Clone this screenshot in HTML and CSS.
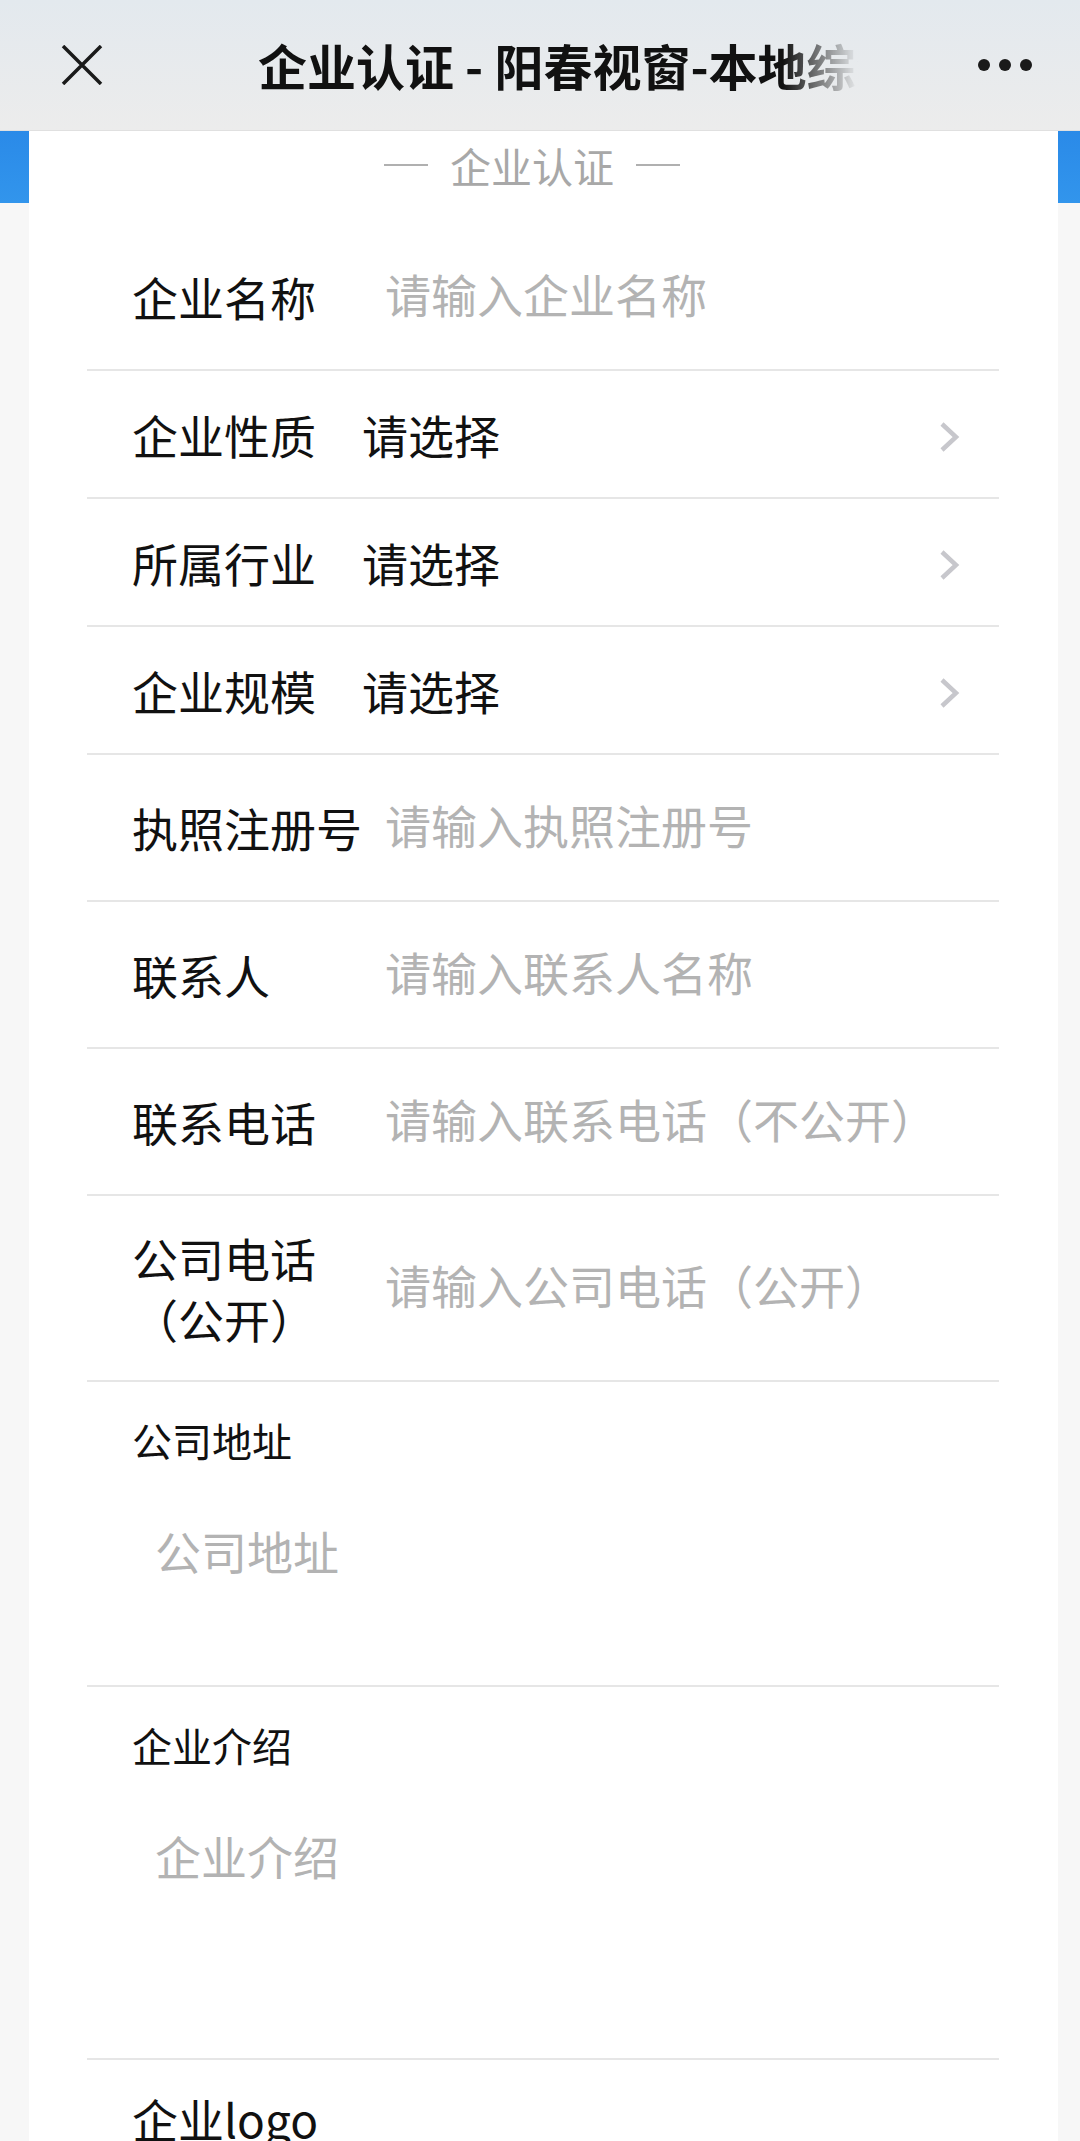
FILE: index.html
```html
<!DOCTYPE html>
<html lang="zh-CN">
<head>
    <meta charset="UTF-8">
    <meta name="viewport" content="width=device-width, initial-scale=1.0">
    <title>企业认证 - 阳春视窗-本地综合门户</title>
    <link rel="stylesheet" href="styles.css">
</head>
<body>
    <header class="navbar">
        <button class="nav-close" aria-label="关闭">
            <svg width="42" height="40" viewBox="0 0 42 40">
                <path d="M2 1 L40 39 M40 1 L2 39" stroke="#1a1a1a" stroke-width="3.5" fill="none"/>
            </svg>
        </button>
        <div class="nav-title">企业认证 - 阳春视窗-本地综合门户</div>
        <div class="nav-more">
            <span></span><span></span><span></span>
        </div>
    </header>

    <main class="page">
        <div class="card">
            <h2 class="section-title">企业认证</h2>

            <form class="form">
                <div class="cell cell-input">
                    <label class="cell-label">企业名称</label>
                    <input class="cell-field" type="text" placeholder="请输入企业名称">
                </div>

                <div class="cell cell-select">
                    <label class="cell-label">企业性质</label>
                    <span class="cell-value">请选择</span>
                    <svg class="cell-arrow" width="22" height="32" viewBox="0 0 22 32">
                        <path d="M3 3 L17 16 L3 29" stroke="#c7c7cc" stroke-width="4.5" fill="none"/>
                    </svg>
                </div>

                <div class="cell cell-select">
                    <label class="cell-label">所属行业</label>
                    <span class="cell-value">请选择</span>
                    <svg class="cell-arrow" width="22" height="32" viewBox="0 0 22 32">
                        <path d="M3 3 L17 16 L3 29" stroke="#c7c7cc" stroke-width="4.5" fill="none"/>
                    </svg>
                </div>

                <div class="cell cell-select">
                    <label class="cell-label">企业规模</label>
                    <span class="cell-value">请选择</span>
                    <svg class="cell-arrow" width="22" height="32" viewBox="0 0 22 32">
                        <path d="M3 3 L17 16 L3 29" stroke="#c7c7cc" stroke-width="4.5" fill="none"/>
                    </svg>
                </div>

                <div class="cell cell-input">
                    <label class="cell-label">执照注册号</label>
                    <input class="cell-field" type="text" placeholder="请输入执照注册号">
                </div>

                <div class="cell cell-input">
                    <label class="cell-label">联系人</label>
                    <input class="cell-field" type="text" placeholder="请输入联系人名称">
                </div>

                <div class="cell cell-input">
                    <label class="cell-label">联系电话</label>
                    <input class="cell-field" type="tel" placeholder="请输入联系电话（不公开）">
                </div>

                <div class="cell cell-input">
                    <label class="cell-label">公司电话（公开）</label>
                    <input class="cell-field" type="tel" placeholder="请输入公司电话（公开）">
                </div>

                <div class="cell cell-area">
                    <label class="area-label">公司地址</label>
                    <textarea class="area-field area-short" placeholder="公司地址"></textarea>
                </div>

                <div class="cell cell-area">
                    <label class="area-label">企业介绍</label>
                    <textarea class="area-field area-long" placeholder="企业介绍"></textarea>
                </div>

                <div class="cell cell-upload">
                    <label class="cell-label">企业logo</label>
                    <div class="upload-box">+</div>
                </div>
            </form>
        </div>
    </main>
</body>
</html>
```

FILE: styles.css
```css
* {
    margin: 0;
    padding: 0;
    box-sizing: border-box;
}

body {
    font-family: "Noto Sans CJK SC", "Noto Sans", sans-serif;
    background: #f7f7f7;
    color: #111;
}

/* top bar */
.navbar {
    display: flex;
    align-items: center;
    height: 131px;
    background: linear-gradient(180deg, #e3e9ee 0%, #ececec 100%);
    border-bottom: 1px solid #e0e0e0;
}

.nav-close {
    display: flex;
    width: 42px;
    height: 40px;
    margin-left: 61px;
    border: none;
    background: none;
}

.nav-title {
    width: 600px;
    margin-left: 155px;
    font-size: 49px;
    font-weight: 700;
    line-height: 60px;
    color: #111;
    white-space: nowrap;
    overflow: hidden;
    -webkit-mask-image: linear-gradient(to right, #000 calc(100% - 75px), transparent);
    mask-image: linear-gradient(to right, #000 calc(100% - 75px), transparent);
}

.nav-more {
    display: flex;
    gap: 9px;
    margin-left: auto;
    margin-right: 48px;
}

.nav-more span {
    width: 12px;
    height: 12px;
    border-radius: 50%;
    background: #1a1a1a;
}

/* page */
.page {
    min-height: 2100px;
    background: linear-gradient(180deg, #2a8ae8, #3295ec) top / 100% 72px no-repeat, #f7f7f7;
}

.card {
    width: 1029px;
    margin-left: 29px;
    min-height: 2100px;
    background: #fff;
}

.section-title {
    display: flex;
    align-items: center;
    justify-content: center;
    gap: 22px;
    padding: 6px 23px 31px 0;
    font-size: 41px;
    font-weight: 400;
    line-height: 56px;
    color: #a8a8a8;
}

.section-title::before,
.section-title::after {
    content: "";
    width: 44px;
    height: 2px;
    background: #b0b0b0;
}

.form {
    margin: 0 59px 0 58px;
}

.cell {
    display: flex;
    align-items: center;
    padding-left: 45px;
    padding-right: 38px;
    border-bottom: 2px solid #e6e6e6;
}

.cell-input {
    padding-top: 31px;
    padding-bottom: 31px;
}

.cell-select {
    padding-top: 33px;
    padding-bottom: 32px;
}

.cell-label {
    flex-shrink: 0;
    width: 230px;
    font-size: 46px;
    line-height: 61px;
    color: #111;
}

.cell-field {
    flex: 1;
    min-width: 0;
    height: 83px;
    padding: 0 0 8px 23px;
    border: none;
    outline: none;
    background: transparent;
    font-family: inherit;
    font-size: 46px;
    color: #111;
}

.cell-field::placeholder,
.area-field::placeholder {
    color: #b3b3b3;
}

.cell-value {
    flex: 1;
    font-size: 46px;
    line-height: 61px;
    color: #111;
}

.cell-arrow {
    margin-top: 5px;
}

.cell-area {
    display: block;
    padding-top: 30px;
    padding-bottom: 13px;
}

.area-label {
    display: block;
    font-size: 40px;
    line-height: 56px;
    color: #111;
}

.area-field {
    display: block;
    width: 100%;
    margin-top: 28px;
    padding: 20px 23px;
    border: none;
    outline: none;
    resize: none;
    background: transparent;
    font-family: inherit;
    font-size: 46px;
    line-height: 68px;
    color: #111;
}

.area-short {
    height: 176px;
}

.area-long {
    height: 244px;
}

.cell-upload {
    display: block;
    padding-top: 28px;
    padding-bottom: 40px;
    border-bottom: none;
}

.upload-box {
    display: flex;
    align-items: center;
    justify-content: center;
    width: 200px;
    height: 200px;
    margin-top: 30px;
    border: 2px dashed #d0d0d0;
    font-size: 80px;
    color: #c0c0c0;
}
```
